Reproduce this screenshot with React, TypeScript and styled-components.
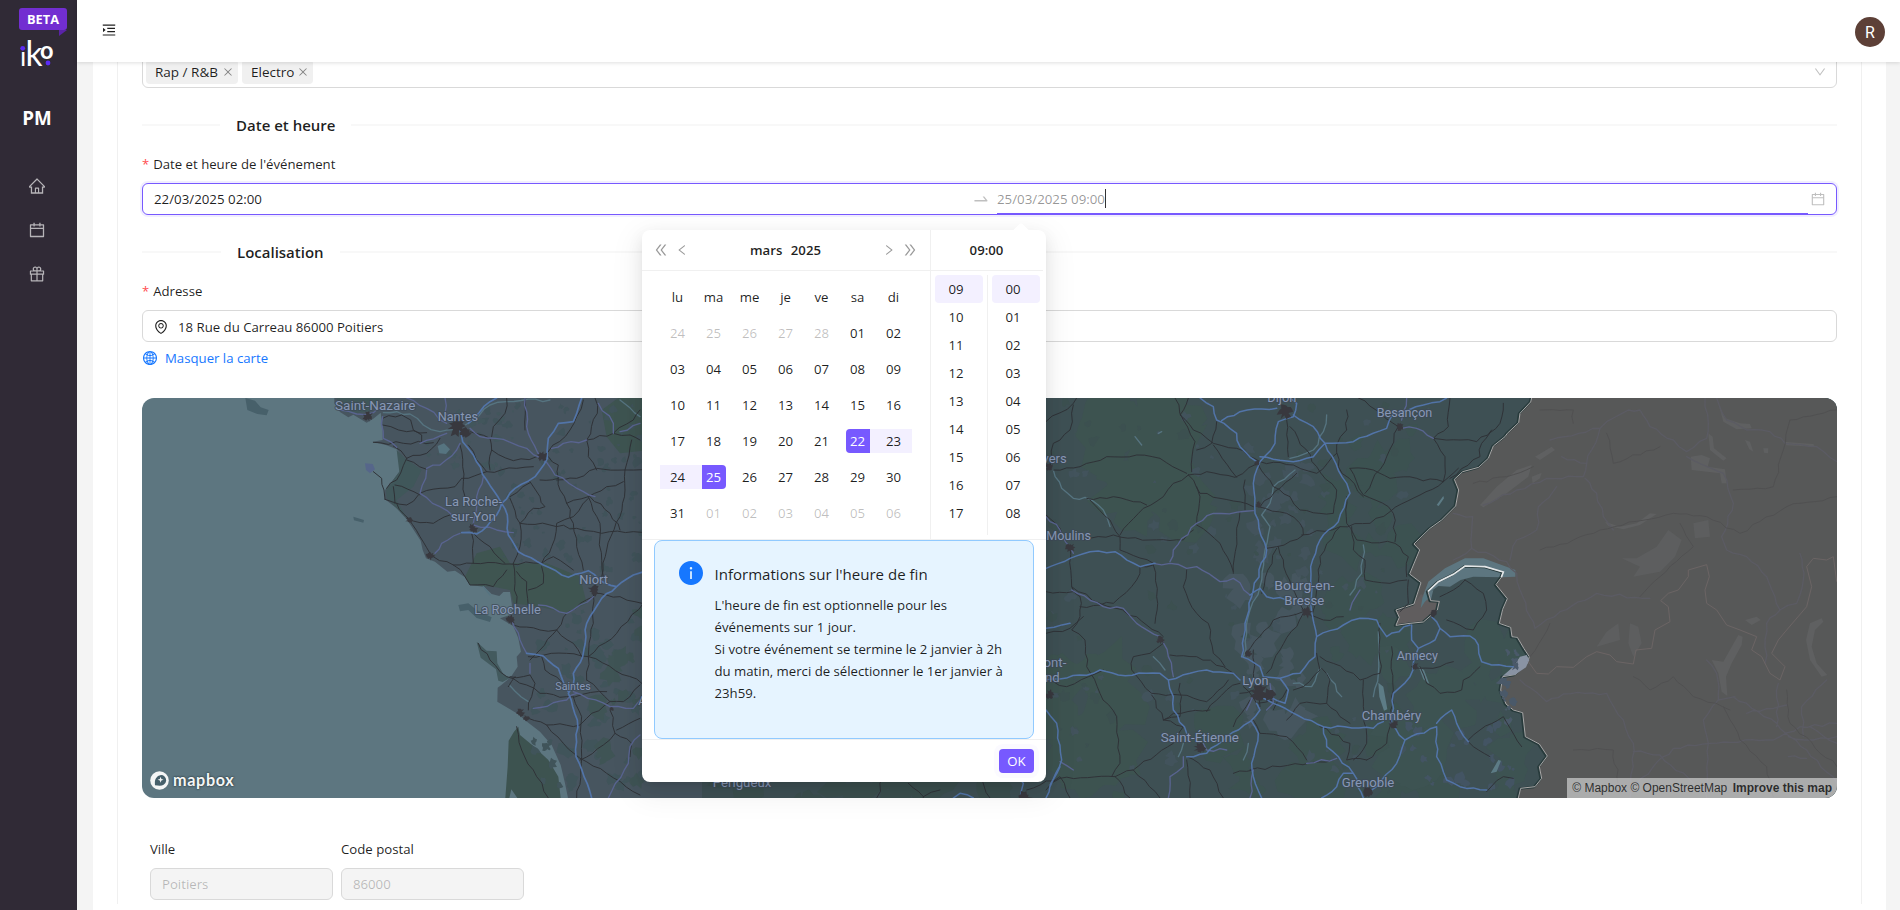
import React from "react";
import styled, { createGlobalStyle, css } from "styled-components";
import type { IconType } from "react-icons";
import {
  AiFillInfoCircle,
  AiOutlineCalendar,
  AiOutlineClose,
  AiOutlineDoubleLeft,
  AiOutlineDoubleRight,
  AiOutlineDown,
  AiOutlineEnvironment,
  AiOutlineGift,
  AiOutlineGlobal,
  AiOutlineHome,
  AiOutlineLeft,
  AiOutlineMenuUnfold,
  AiOutlineRight,
  AiOutlineSwapRight,
} from "react-icons/ai";

const PRIMARY = "#7759ff";
const PRIMARY_BG = "#f3f0ff";
const TEXT = "rgba(0, 0, 0, 0.88)";
const FAINT = "rgba(0, 0, 0, 0.25)";
const SPLIT = "#f0f0f0";

const GlobalStyle = createGlobalStyle`
  * { box-sizing: border-box; }
  body { margin: 0; overflow: hidden; }
  body, input, button {
    font-family: "Open Sans", "Noto Sans", sans-serif;
    font-size: 13.2px;
    line-height: 22px;
    color: ${TEXT};
  }
  svg { display: block; }
`;

/* The glyphs keep a 64-unit margin in their 1024 grid; trim it so that size is the drawn size. */
const Icon = ({ of: Glyph, size }: { of: IconType; size: number }) => (
  <Glyph size={size} viewBox="64 64 896 896" />
);

/* ---------- Shell ---------- */

const Shell = styled.div`
  display: flex;
  width: 100%;
  height: 100vh;
  overflow: hidden;
  background: #f4f4f4;
`;

const Sidebar = styled.aside`
  display: flex;
  flex-direction: column;
  align-items: center;
  flex: 0 0 77px;
  padding: 8px 3px 0 0;
  background: #302a36;
`;

const Beta = styled.div`
  position: relative;
  width: 48px;
  height: 22px;
  margin-left: 12px;
  border-radius: 3px;
  background: #722ed1;
  color: #fff;
  font-size: 12.8px;
  font-weight: 700;
  text-align: center;

  &::after {
    content: "";
    position: absolute;
    top: 22px;
    right: 0;
    border: 4px solid transparent;
    border-width: 0 8px 6px 0;
    border-color: transparent;
    border-top: 6px solid #5a23a8;
    border-bottom: 0;
  }
`;

const LogoSvg = styled.svg`
  margin-top: 3px;
`;

const Initials = styled.div`
  margin-top: 25px;
  color: #fff;
  font-size: 18.8px;
  font-weight: 700;
  line-height: 28px;
`;

const Nav = styled.nav`
  display: flex;
  flex-direction: column;
  gap: 28px;
  margin-top: 46px;
  color: rgba(255, 255, 255, 0.65);
`;

const Main = styled.div`
  display: flex;
  flex-direction: column;
  flex: 1;
  min-width: 0;
`;

const Header = styled.header`
  position: relative;
  z-index: 2;
  display: flex;
  align-items: center;
  justify-content: space-between;
  flex: 0 0 62px;
  padding: 0 15px 0 25px;
  background: #fff;
  box-shadow: 0 1px 4px rgba(0, 0, 0, 0.13);
`;

const Toggle = styled.div`
  padding-bottom: 2px;
`;

const Avatar = styled.div`
  width: 30px;
  height: 30px;
  margin-top: 2px;
  border-radius: 50%;
  background: #5d4037;
  color: #fff;
  font: 16px/31px Roboto, sans-serif;
  text-align: center;
`;

const Card = styled.main`
  flex: 1;
  min-height: 0;
  margin: 0 14px 0 16px;
  padding: 0 24px;
  background: #fff;
`;

const Form = styled.section`
  height: 100%;
  padding: 0 24px;
  border: solid ${SPLIT};
  border-width: 0 1px;
`;

/* ---------- Fields ---------- */

const control = css`
  display: flex;
  align-items: center;
  height: 32px;
  border: 1px solid #d9d9d9;
  border-radius: 6px;
  background: #fff;
`;

const Select = styled.div`
  ${control}
  margin-top: -6px;
  padding: 0 10px 0 3px;
  color: ${FAINT};
`;

const Tags = styled.div`
  display: flex;
  flex: 1;
  gap: 4px;
`;

const Tag = styled.span<{ $width: number }>`
  display: inline-flex;
  align-items: center;
  justify-content: space-between;
  width: ${(p) => p.$width}px;
  height: 24px;
  padding: 0 5px 0 9px;
  border-radius: 4px;
  background: #f0f0f0;
  color: ${TEXT};
  font-size: 13.5px;

  svg { color: rgba(0, 0, 0, 0.45); }
`;

const Divider = styled.h3<{ $lead: number }>`
  display: flex;
  align-items: center;
  height: 24px;
  margin: 25px 0 16px;
  font-size: 15px;
  font-weight: 600;
  line-height: 24px;

  &::before,
  &::after {
    content: "";
    height: 2px;
    background: #f8f8f8;
  }
  &::before { width: ${(p) => p.$lead}px; margin-right: 16px; }
  &::after { flex: 1; margin-left: 16px; }
`;

const Label = styled.label<{ $required?: boolean }>`
  display: block;
  margin-bottom: 8px;

  ${(p) =>
    p.$required &&
    css`
      &::before {
        content: "*";
        margin-right: 4px;
        color: #ff4d4f;
        font-size: 13px;
      }
    `}
`;

const Range = styled.div`
  ${control}
  position: relative;
  padding: 0 11px;
  border-color: ${PRIMARY};
  box-shadow: 0 0 0 2px rgba(119, 89, 255, 0.1);
`;

const RangeValue = styled.div<{ $active?: boolean }>`
  display: flex;
  align-items: center;
  flex: 1;
  height: 32px;
  font-size: 13.3px;
  ${(p) =>
    p.$active &&
    css`
      color: rgba(0, 0, 0, 0.42);
      border-bottom: 2px solid ${PRIMARY};
      padding-top: 1px;
    `}
`;

const Caret = styled.i`
  width: 1px;
  height: 19px;
  background: #333;
`;

const RangeArrow = styled.div`
  padding: 0 8px;
  color: ${FAINT};
`;

const RangeIcon = styled.div`
  margin-left: 3px;
  color: ${FAINT};
`;

const Address = styled.div`
  ${control}
  gap: 10px;
  padding: 1px 11px 0;
`;

const MapLink = styled.a`
  display: flex;
  align-items: center;
  gap: 8px;
  margin: 5px 0 29px 1px;
  color: #1677ff;
`;

const Row = styled.div`
  display: flex;
  gap: 8px;
  padding: 40px 8px 0;
`;

const Disabled = styled.div`
  ${control}
  width: 183px;
  padding: 0 11px;
  background: #f4f4f4;
  color: ${FAINT};
`;

/* ---------- Date picker popup ---------- */

const Popup = styled.div`
  position: absolute;
  z-index: 5;
  top: 46px;
  left: 499px;
  width: 404px;
  border-radius: 8px;
  background: #fff;
  box-shadow: 0 6px 16px rgba(0, 0, 0, 0.08), 0 3px 6px -4px rgba(0, 0, 0, 0.12),
    0 9px 28px 8px rgba(0, 0, 0, 0.05);

  &::before {
    content: "";
    position: absolute;
    top: -5px;
    left: 373px;
    width: 12px;
    height: 12px;
    border-radius: 2px;
    background: #fff;
    transform: rotate(45deg);
  }
`;

const Panels = styled.div`
  position: relative;
  display: flex;
  height: 310px;
  border-bottom: 1px solid ${SPLIT};
`;

const DatePanel = styled.div`
  width: 289px;
  border-right: 1px solid ${SPLIT};
`;

const PanelHeader = styled.div`
  display: flex;
  align-items: center;
  gap: 8px;
  height: 41px;
  padding: 0 13px 0 12px;
  border-bottom: 1px solid ${SPLIT};
  font-weight: 600;

  svg { color: rgba(0, 0, 0, 0.4); }
`;

const PanelTitle = styled.div`
  flex: 1;
  text-align: center;
  word-spacing: 5px;
`;

const Grid = styled.div`
  display: grid;
  grid-template-columns: repeat(7, 36px);
  grid-auto-rows: 36px;
  margin: 8px 18px 0 17.5px;
`;

type DayState = "out" | "start" | "end" | "first" | "last" | undefined;

const Cell = styled.div<{ $state?: DayState }>`
  display: flex;
  align-items: center;
  justify-content: center;
  height: 24px;
  margin: 6px 0;
  ${(p) => p.$state === "out" && css`color: ${FAINT};`}
  ${(p) =>
    p.$state === "start" &&
    css`background: linear-gradient(90deg, transparent 50%, ${PRIMARY_BG} 50%);`}
  ${(p) =>
    p.$state === "end" &&
    css`background: linear-gradient(90deg, ${PRIMARY_BG} 50%, transparent 50%);`}
  ${(p) => (p.$state === "last" || p.$state === "first") && css`background: ${PRIMARY_BG};`}
`;

const Day = styled.span<{ $state?: DayState }>`
  width: 24px;
  line-height: 24px;
  text-align: center;
  ${(p) =>
    (p.$state === "start" || p.$state === "end") &&
    css`
      background: ${PRIMARY};
      color: #fff;
      border-radius: ${p.$state === "start" ? "4px 0 0 4px" : "0 4px 4px 0"};
    `}
`;

const TimePanel = styled.div`
  width: 112px;
`;

const TimeColumns = styled.div`
  display: grid;
  grid-template-columns: 56px 57px;
  padding-top: 4px;
`;

const TimeColumn = styled.div`
  height: 260px;

  & + & { border-left: 1px solid ${SPLIT}; }
`;

const TimeCell = styled.div<{ $on?: boolean }>`
  width: 48px;
  height: 28px;
  margin-left: 4px;
  padding-left: 13.5px;
  border-radius: 4px;
  line-height: 28px;
  background: ${(p) => (p.$on ? PRIMARY_BG : "transparent")};
`;

const Alert = styled.div`
  display: flex;
  gap: 11.5px;
  width: 380px;
  height: 199px;
  margin: 0 12px;
  padding: 20px 24px;
  border: 1px solid #91caff;
  border-radius: 8px;
  background: #e6f4ff;

  svg { color: #1677ff; flex: none; }
`;

const AlertTitle = styled.div`
  margin: 1px 0 8px;
  font-size: 15.05px;
  line-height: 24px;
`;

const AlertText = styled.p`
  margin: 0;
  white-space: nowrap;
`;

const PopupFooter = styled.div`
  display: flex;
  justify-content: flex-end;
  height: 43px;
  padding: 9px 12px;
  border-top: 1px solid ${SPLIT};
`;

const OkButton = styled.button`
  width: 35px;
  height: 24px;
  padding: 0;
  border: 0;
  border-radius: 4px;
  background: ${PRIMARY};
  color: #fff;
  box-shadow: 0 0 0 5px rgba(119, 89, 255, 0.03);
`;

/* ---------- Map ---------- */

const MapFrame = styled.div`
  position: relative;
  height: 400px;
  border-radius: 12px;
  overflow: hidden;
  background: #5d7680;
`;

const Attribution = styled.div`
  position: absolute;
  right: 0;
  bottom: 0;
  height: 20px;
  padding: 0 5px;
  background: rgba(255, 255, 255, 0.5);
  color: rgba(0, 0, 0, 0.75);
  font: 12px/20px "Liberation Sans", sans-serif;
  white-space: nowrap;

  b { margin-left: 2px; }
`;

const MapboxMark = styled.div`
  position: absolute;
  left: 8px;
  bottom: 8px;
  display: flex;
  align-items: center;
  gap: 4px;
  color: #f4f6f6;
  font: 700 16.2px/20px Lato, sans-serif;
  letter-spacing: 0.65px;
  text-shadow: 0 0 2px #2e3e44, 0 0 2px #2e3e44;
`;

const noise = (n: number) => {
  const s = Math.sin(n * 127.1 + 311.7) * 43758.5453;
  return s - Math.floor(s);
};

/* Turns "x,y x,y ..." into a slightly irregular line, as surveyed roads are. */
const wobble = (points: string, amount = 5) => {
  const pts = points.split(" ").map((p) => p.split(",").map(Number));
  let d = `M${pts[0][0]} ${pts[0][1]}`;
  for (let i = 1; i < pts.length; i++) {
    const [ax, ay] = pts[i - 1];
    const [bx, by] = pts[i];
    const len = Math.hypot(bx - ax, by - ay);
    const steps = Math.max(1, Math.round(len / 22));
    for (let k = 1; k < steps; k++) {
      const t = k / steps;
      const off = (noise(ax + by * 3 + k * 7) - 0.5) * amount * 2;
      d += `L${(ax + (bx - ax) * t + (off * (by - ay)) / len).toFixed(1)} ${(ay + (by - ay) * t - (off * (bx - ax)) / len).toFixed(1)}`;
    }
    d += `L${bx} ${by}`;
  }
  return d;
};

const Roads = ({ lines, color, width, amount }: { lines: string[]; color: string; width: number; amount?: number }) => (
  <path d={lines.map((l) => wobble(l, amount)).join("")} fill="none" stroke={color} strokeWidth={width} strokeLinejoin="round" strokeLinecap="round" />
);

const Patches = ({ seed, count, x, y, w, h, size, color }: { seed: number; count: number; x: number; y: number; w: number; h: number; size: number; color: string }) => {
  let d = "";
  for (let i = 0; i < count; i++) {
    const cx = x + noise(seed + i * 3) * w;
    const cy = y + noise(seed + i * 3 + 1) * h;
    const r = size * (0.3 + noise(seed + i * 3 + 2));
    for (let k = 0; k < 11; k++) {
      const a = (k / 11) * Math.PI * 2;
      const q = r * (0.45 + noise(seed + i * 17 + k) * 0.75);
      d += `${k ? "L" : "M"}${(cx + Math.cos(a) * q).toFixed(0)} ${(cy + Math.sin(a) * q).toFixed(0)}`;
    }
    d += "Z";
  }
  return <path d={d} fill={color} />;
};

const DARK = "#2f3237";
const BLUE = "#5274a8";
const VIOLET = "#596490";

const Place = ({ x, y, w, size = 40, children }: { x: number; y: number; w: number; size?: number; children: string }) => (
  <text x={x} y={y} fontSize={size} textLength={w} lengthAdjust="spacingAndGlyphs" fontFamily="Roboto, sans-serif" fill="#8797b5" stroke="#3d4957" strokeWidth={6} strokeOpacity={0.75} paintOrder="stroke" strokeLinejoin="round">
    {children}
  </text>
);

const City = ({ x, y, r }: { x: number; y: number; r: number }) => {
  let d = "";
  for (let k = 0; k < 18; k++) {
    const a = (k / 18) * Math.PI * 2;
    const q = r * (k % 2 ? 0.35 : 0.6) + r * noise(x + k * 5) * 0.5;
    d += `${k ? "L" : "M"}${(x + Math.cos(a) * q).toFixed(0)} ${(y + Math.sin(a) * q).toFixed(0)}`;
  }
  return <path d={d + "Z"} fill="#38383e" />;
};

const WEST_COAST =
  "M583 0L583 40L600 66L625 82L640 74L680 98L700 86L722 68L728 110L728 150L698 155L740 166L770 178L792 208L778 245L755 275L735 300L735 328L770 355L800 388L815 410L842 452L848 480L858 505L885 515L922 545L945 542L975 562L990 585L1032 590L1055 612L1078 618L1090 606L1110 606L1115 640L1118 672L1080 685L1105 700L1120 708L1135 745L1143 785L1130 800L1133 830L1112 862L1085 884L1073 893L1072 935L1130 970L1165 998L1200 1025L1235 1065L1262 1125L1275 1180L1284 1224L2760 1224L2760 0Z";

const WestMap = () => (
  <g transform="translate(-2 -8) scale(.33333)">
    <path d={WEST_COAST} fill="#47555f" />
    <path d="M1135 1010L1122 1025L1106 1052L1103 1130L1096 1224L1108 1224L1114 1198L1132 1224L1262 1224L1255 1160L1225 1110L1180 1068L1140 1035Z" fill="#3d5350" />
    <path d="M1010 755L1040 782L1070 784L1072 820L1090 852L1110 864L1088 876L1075 872L1068 838L1022 803Z" fill="#435a5e" />
    <path d="M316 24L345 32L362 52L386 60L380 76L352 72L322 60ZM640 380L672 390L670 398L642 391ZM955 645L985 640L1010 660L1055 682L1050 696L1010 684L985 660L960 664Z" fill="#47606a" />
    <path d="M675 220L698 222L705 238L690 250L678 240Z" fill="#56668a" />
    <path d="M975 560L1010 490L1080 470L1110 520L1220 520L1320 560L1340 640L1280 670L1200 650L1120 640L1110 600L1060 590L990 585Z" fill="#3f5551" />
    <path d="M1385 60L1440 20L1530 0L1530 180L1440 190L1400 140Z" fill="#3e5451" />
    <path d="M770 180L795 205L845 240L820 290L770 330L800 385L740 325L738 300L778 245Z" fill="#40575a" />
    <path d="M722 24L590 24L600 62L640 70L690 64Z" fill="#40575a" />
    <Patches seed={3} count={80} x={1030} y={40} w={500} h={520} size={13} color="#40535a" />
    <Patches seed={41} count={60} x={1180} y={660} w={350} h={560} size={19} color="#40545a" />
    <Patches seed={77} count={26} x={860} y={60} w={260} h={180} size={11} color="#42565c" />
    <Patches seed={91} count={22} x={1370} y={660} w={150} h={520} size={28} color="#3f5455" />
    <path d="M893 168L912 160L930 178L918 192L898 190Z" fill="#567480" />
    <Roads lines={["730,68 810,72 850,105 900,125 960,118 1000,90 1050,45 1100,35 1230,30", "1108,885 1165,935", "1440,30 1500,80", "1030,590 1050,615"]} color="#567480" width={4} />
    <Roads
      color={DARK}
      width={3}
      lines={[
        "728,85 785,75 812,90 820,120 845,135 845,157", "728,105 800,125 860,128", "700,157 790,160 880,158", "760,168 800,205 860,190 900,145", "800,205 770,270 740,295", "800,210 860,238", "840,310 900,295 945,290 965,265 1040,245 1130,235 1180,230", "765,285 840,315", "760,290 765,340", "735,328 800,345 835,315", "800,385 840,398 880,400 930,375", "960,165 968,230 975,320", "700,245 725,265 732,300 735,328", "770,340 805,385 840,440 870,490", "985,165 1040,245", "990,125 1050,145 1055,180 1050,240", "1100,24 1095,70 1060,110 1055,140", "1055,180 1120,212 1190,200", "1155,24 1155,120", "1225,185 1290,120 1310,80 1330,30", "1225,200 1255,225 1255,265 1200,270", "1250,270 1310,265 1370,235 1455,240 1530,245", "1340,150 1420,130 1470,135 1500,150", "1340,150 1345,200 1370,240", "1365,24 1372,70 1340,150", "1500,60 1480,90 1420,130", "1475,150 1455,240 1455,300 1440,380 1400,480 1385,560", "1255,265 1260,300 1280,340 1345,320 1400,290 1450,275", "1170,275 1200,320 1215,350 1180,355 1140,400", "1110,320 1170,278", "1110,325 1140,400 1140,470 1120,520", "1140,400 1230,405 1310,415 1385,430 1480,425 1530,425", "1345,320 1380,400 1380,440 1390,560", "1345,325 1300,380 1250,400 1235,470 1205,520", "1350,320 1410,370 1440,420", "1280,340 1300,400 1310,470 1330,540", "1000,430 1050,470 1095,520", "995,430 1000,520", "880,500 940,525 1000,520 1110,522 1205,520 1240,500 1300,540", "940,525 975,560 990,585 1060,590 1100,540", "1120,520 1125,580 1130,640", "1130,545 1160,575 1165,650", "1205,530 1210,580 1165,600", "1360,610 1360,700 1345,800 1340,870", "1360,610 1440,620 1530,650", "1510,640 1430,730 1345,800", "1120,705 1200,720 1250,720 1285,665 1360,620", "1250,720 1200,780 1170,810", "1250,720 1300,760 1325,800", "1165,800 1280,790 1345,800 1530,890", "1205,800 1215,840 1280,890", "1015,760 1050,810 1100,860 1160,885 1200,910 1280,920 1400,905", "1110,860 1170,855 1185,880 1175,920 1165,960", "1125,860 1105,890", "1340,870 1410,935 1450,935 1500,885", "1410,935 1340,985 1320,1005 1220,1005 1165,985", "1300,920 1325,980 1325,1100 1310,1224", "1410,960 1425,1030 1475,1060 1470,1100", "1425,1030 1390,1065 1320,1110", "1220,1005 1270,1060 1320,1105 1400,1150 1500,1215", "1130,1010 1145,1080 1190,1160 1225,1224", "1500,985 1430,1020",
      ]}
    />
    <Roads
      color={VIOLET}
      width={4}
      lines={["600,60 650,72 700,68 728,50", "728,80 730,145 770,172", "800,24 860,55 920,100", "915,24 915,70 950,100", "840,160 920,130", "860,235 900,225 950,180 960,160", "860,240 840,310 900,350 960,390", "1030,260 1010,320 1000,400", "990,115 1020,140 1090,148 1160,175 1205,205 1245,255 1330,305 1365,320", "1155,24 1160,110 1205,205", "1000,405 1070,420 1120,428", "885,490 905,460 960,430", "1235,175 1270,160 1340,150", "1375,40 1420,100 1420,130", "1440,125 1500,100", "1195,645 1280,670 1320,645 1360,620", "1115,690 1140,750 1160,790", "1170,820 1170,850", "1180,955 1280,930 1310,910", "1300,905 1410,950 1480,955 1500,930", "1500,1035 1470,1070 1465,1120 1405,1224"]}
    />
    <Roads
      color={BLUE}
      width={5}
      amount={3}
      lines={["960,118 968,155 1000,195 1040,270 1085,340 1102,375 1105,435 1135,485 1210,525 1285,562 1345,542 1395,580 1430,590 1480,555 1530,540", "985,100 1050,35 1070,24", "1325,24 1300,95 1255,100 1225,145 1222,205 1185,260 1125,295 1085,340 1070,375 1040,410 1010,432 965,428", "1430,590 1385,625 1340,700 1328,800 1300,850 1300,885 1285,910 1312,990 1308,1100 1355,1224", "1160,790 1210,798 1255,835 1285,905"]}
    />
    <City x={950} y={108} r={34} /><City x={975} y={130} r={20} /><City x={1207} y={200} r={17} /><City x={998} y={415} r={16} /><City x={870} y={497} r={16} /><City x={1362} y={600} r={19} /><City x={1112} y={690} r={16} /><City x={685} y={80} r={18} /><City x={808} y={390} r={12} /><City x={1140} y={968} r={15} /><City x={1160} y={985} r={12} /><City x={1415} y={957} r={8} />
    <Place x={585} y={61} w={241}>Saint-Nazaire</Place>
    <Place x={893} y={92} w={121}>Nantes</Place>
    <Place x={915} y={347} w={171}>La Roche-</Place>
    <Place x={932} y={392} w={136}>sur-Yon</Place>
    <Place x={1318} y={581} w={86}>Niort</Place>
    <Place x={1003} y={671} w={200}>La Rochelle</Place>
    <Place x={1246} y={899} w={106} size={33}>Saintes</Place>
    <Place x={1495} y={945} w={24}>A</Place>
  </g>
);

/* The border between France and its eastern neighbours. */
const BORDER =
  "M1475 24L1472 36L1440 70L1436 98L1402 130L1395 140L1360 168L1345 205L1316 232L1268 245L1243 268L1256 300L1247 348L1205 390L1170 415L1122 462L1139 480L1109 552L1143 578L1122 642L1068 660L1078 682L1068 706L1110 700L1150 696L1192 660L1198 634L1172 632L1164 604L1195 575L1240 553L1275 528L1335 530L1390 546L1384 562L1368 584L1402 626L1388 658L1378 700L1412 712L1416 740L1432 742L1452 776L1468 800L1462 820L1425 854L1388 860L1382 900L1398 942L1420 960L1448 968L1456 1040L1498 1062L1522 1098L1498 1130L1505 1165L1485 1190L1442 1195L1435 1224";

const EastMap = () => (
  <g transform="translate(898 -8) scale(.33333)">
    <rect x={-1200} y={0} width={3700} height={1230} fill="#3e5054" />
    <Patches seed={7} count={26} x={180} y={40} w={260} h={380} size={80} color="#3d5350" />
    <Patches seed={19} count={22} x={30} y={820} w={230} h={400} size={75} color="#3d5350" />
    <Patches seed={29} count={30} x={880} y={100} w={230} h={700} size={65} color="#3c5251" />
    <Patches seed={57} count={26} x={480} y={1000} w={760} h={220} size={60} color="#3c5250" />
    <Patches seed={67} count={30} x={1060} y={760} w={400} h={460} size={70} color="#3d5352" />
    <Patches seed={12} count={34} x={590} y={560} w={200} h={470} size={40} color="#46565f" />
    <Patches seed={88} count={28} x={640} y={230} w={180} h={320} size={26} color="#43535c" />
    <Patches seed={71} count={60} x={20} y={30} w={1150} h={1180} size={16} color="#42535c" />
    <Patches seed={52} count={60} x={20} y={30} w={1150} h={1180} size={16} color="#3c5050" />
    <Patches seed={63} count={24} x={1100} y={1000} w={340} h={200} size={15} color="#435463" />
    <Patches seed={22} count={24} x={-1200} y={1170} w={1200} h={70} size={50} color="#3b4f4e" />
    <path d={BORDER + "L2500 1224L2500 0L1475 0Z"} fill="#575858" />
    <path d="M1180 600L1172 632L1142 655L1148 620L1165 575L1215 535L1275 505L1330 505L1385 525L1426 540L1426 560L1384 562L1300 560L1262 570L1230 590L1195 588L1170 606Z" fill="#5d7680" />
    <path d="M1068 706L1078 682L1068 660L1122 642L1143 612L1172 632L1198 634L1192 660L1150 696L1110 700Z" fill="#605d5e" />
    <path d="M1142 655L1148 620L1160 610L1166 625L1154 636Z" fill="#567681" />
    <path d={BORDER} fill="none" stroke="#273a3b" strokeWidth={7} transform="translate(-3 1)" strokeLinejoin="round" />
    <path d={BORDER} fill="none" stroke="#aaa8a8" strokeWidth={3} strokeLinejoin="round" />
    <path d="M1164 604L1195 575L1240 553L1275 528L1335 530L1390 546L1384 562" fill="none" stroke="#e2e6e8" strokeWidth={5} />
    <path d="M1460 795L1468 810L1458 832L1425 854L1388 858L1420 830L1440 800Z" fill="#8993a3" />
    <Patches seed={15} count={20} x={1380} y={780} w={50} h={240} size={14} color="#4a5969" />
    <g fill="#5f6061">
      <path d="M1320 345L1370 290L1430 240L1475 225L1465 260L1400 310L1330 352ZM1485 200L1535 170L1545 180L1500 210ZM1475 260L1505 248L1500 265L1478 280Z" />
      <path d="M1695 395L1740 410L1790 400L1830 370L1850 372L1800 405L1750 418L1705 408ZM1952 200L1985 195L2010 205L2003 230L2055 238L2060 280L2045 280L2040 250L1955 240ZM2005 130L2018 140L2022 175L2060 205L2050 212L2010 180ZM2035 40L2055 85L2100 100L2130 102L2135 115L2090 118L2050 95Z" />
      <path d="M1745 505L1790 505L1850 470L1885 420L1925 450L1905 500L1860 545L1780 560L1800 530ZM1960 400L2005 390L2010 440L1965 445ZM1670 770L1700 725L1735 700L1740 750ZM1770 700L1795 710L1805 760L1780 800L1765 760Z" opacity=".75" />
      <path d="M2015 810L2050 815L2095 735L2108 740L2105 765L2075 820L2058 860L2062 918L2045 905L2035 850ZM2310 700L2345 685L2350 695L2325 720L2315 770L2330 820L2362 855L2345 860L2310 810L2298 750ZM2115 690L2150 680L2162 690L2135 705Z" />
      <path d="M2115 150L2130 155L2140 185L2128 178ZM2170 175L2185 175L2184 190L2172 188ZM2230 155L2320 162L2325 170L2240 166Z" />
    </g>
    <Roads
      color="#5b5b63"
      width={4}
      lines={["1530,150 1680,115 1700,95 1765,60 1800,60 1830,110 1900,150 1940,185 2000,145 2005,100 1995,24", "1330,345 1430,300 1520,265 1630,260 1640,220 1680,115", "1565,200 1640,220", "1635,265 1670,310 1690,380 1720,420", "1295,475 1298,380 1240,370", "1240,510 1295,475 1400,515 1430,550 1440,600 1470,680 1485,715 1560,665 1670,610 1830,625", "1410,510 1430,450 1490,420 1495,350 1550,290", "2030,24 2060,90 2120,120 2190,125 2235,160 2330,170 2391,215", "1940,200 2050,250 2080,340 2045,440 2060,480 2120,500 2180,560 2220,660 2180,700 2175,820", "2220,660 2270,640 2290,570 2280,490", "1440,870 1520,935 1570,912 1700,910 1750,990 1780,1060 1770,1224", "1780,1085 1860,1095 1960,1180", "1790,1180 1900,1075 2010,1060 2200,1050 2280,1010 2391,1000", "2080,920 2210,1000 2250,1040 2300,1080 2391,1180", "2120,970 2240,945", "2210,1010 2215,880", "2000,810 2030,850 2035,930 1990,990 2005,1060 2000,1224", "2245,1040 2320,1050 2391,1040", "2245,1100 2300,1105", "2290,1040 2285,950 2360,870", "2391,1060 2310,1010", "2035,930 2085,920"]}
    />
    <Roads color="#505051" width={3} lines={["1500,60 1600,60 1600,100", "1700,130 1720,220 1860,170", "1300,280 1400,260 1480,230", "1500,480 1600,450 1680,420 1900,370 2000,380 2100,430 2240,350 2391,320", "2080,300 2200,290 2230,180 2250,90 2391,60", "1920,400 1960,470 1860,560 1800,620", "1470,800 1510,740 1530,700", "1600,1080 1720,1080 1740,1200", "2050,950 2100,1050 2180,1130 2200,1220", "2240,900 2250,1000 2391,1130", "1780,860 1830,900 1900,860 1960,920 2070,960"]} />
    <path d="M1465 815L1490 850L1525 852L1550 830L1600 832L1640 800L1670 785L1710 795L1730 815L1780 822L1788 780L1835 775L1845 720L1890 695L1885 650L1862 632L1885 610L1915 600L1945 560L1945 540L2000 524L2008 560L1995 600L2000 640L2030 660L2060 705L2100 720L2150 740L2135 780L2165 800L2190 850L2220 870L2235 830L2195 790L2215 750L2240 720L2300 650L2315 590L2300 530L2320 505L2360 510L2380 500L2390 575" fill="none" stroke="#6b6464" strokeWidth={3} strokeLinejoin="round" />
    <Roads lines={["40,240 65,295 100,325 135,322 190,360 210,410", "860,75 850,125 820,180 750,205", "765,240 700,290 690,340 665,375 690,410 675,480 660,590 630,660 620,730 610,800", "970,465 965,550 930,615", "1015,725 1015,850 1000,920", "840,835 815,890 760,880", "860,850 905,920", "340,800 375,840", "430,1060 415,1100", "625,1060 610,1110", "285,140 305,165", "355,130 365,125"]} color="#567480" width={4} />
    <path d="M1015 878L1030 890L1042 958L1032 962L1018 920ZM1136 830L1152 840L1168 882L1150 868ZM1190 345L1210 318L1212 325L1196 348ZM1352 1150L1375 1110L1383 1112L1370 1145Z" fill="#5d7c86" />
    <Roads
      color={DARK}
      width={3}
      lines={[
        "18,95 100,40 110,24", "100,45 90,120 40,160 30,230", "40,240 120,230 200,200 290,195 360,205 440,250", "405,24 430,90 465,155 455,245", "445,24 420,75 460,120 520,160 590,175 660,215", "445,255 400,280 370,320 310,355 240,435", "445,255 500,245 585,262 650,222", "530,95 515,160 470,180", "520,165 590,262", "445,255 480,310 540,325 640,350", "470,290 480,320 470,400", "600,365 590,440 580,550", "470,405 540,460 580,545", "615,270 615,360", "140,325 220,320 320,345", "150,330 210,390 240,440 240,480 340,520", "130,450 220,435 330,450 430,450 460,420", "18,375 60,415 90,470 95,590 120,620", "340,525 300,530 290,570 220,640 120,650", "340,525 350,620 345,700", "440,540 430,590 470,670 505,700 520,790 555,830", "18,605 100,605", "120,620 120,680 95,720 135,750 140,830 180,910 230,980 240,1120 215,1160", "18,870 80,890 190,840", "95,590 180,640 290,680 370,740", "370,760 330,790 280,800 275,840 335,910 420,915 500,935 565,870", "390,795 470,800 550,830 600,870", "335,915 370,990 430,1010 400,1060 280,1140 225,1160 60,1165 18,1200", "420,880 420,980 370,990", "225,1160 270,1224", "280,1140 360,1224", "440,1100 510,1140 550,1224", "440,1110 450,1224", "500,965 560,900 600,880", "580,1010 630,930", "655,225 700,290 750,320 780,360 880,370 890,300 830,230 750,110", "660,215 760,225 830,250 890,190", "740,90 745,200", "770,250 660,350", "655,350 740,370 780,400 790,435 710,470 680,475", "715,470 755,590 790,660", "710,475 665,610", "790,665 700,690 620,790", "790,670 720,780 680,850", "790,670 850,690 910,680", "785,435 900,410 990,400 1050,365 1140,315 1210,275", "900,410 840,500 830,600 815,680", "930,235 1000,240 1050,265 1130,265 1210,275 1255,235", "930,235 970,315 1045,350 1060,370 1065,455", "920,60 920,120 890,165 895,230 970,320", "1075,110 1040,200 975,310", "920,320 920,400 950,450 1065,460 1105,500 1100,560", "935,410 940,480 975,510 975,570 1050,580 1100,570", "1180,145 1215,200 1210,275", "1180,145 1260,150 1310,155 1355,120", "1230,24 1225,110 1180,145", "1390,40 1380,100 1325,160 1320,200 1230,265", "955,24 1075,110", "830,790 840,840 790,890 760,900", "845,835 870,870 860,940 780,940 740,990", "860,940 900,980 930,1000", "840,800 940,850 960,870 1020,850 1020,700", "970,870 970,950 980,1060 940,1110", "1055,770 1060,900 1050,1000", "640,990 660,1030 740,1040 800,1110", "630,1140 720,1130 880,1110", "840,1010 930,1060 920,1110 980,1110", "1050,1010 1040,1060 980,1110", "1115,830 1200,830 1240,815", "1140,830 1160,880 1200,910 1265,900 1270,870 1320,830", "1105,570 1105,640 1080,665", "1275,570 1240,600 1200,620", "1275,570 1330,610 1340,660 1300,720 1220,690", "1285,1050 1320,1020 1390,980 1445,1070", "1280,1050 1300,1070 1350,1100", "1340,1205 1390,1160 1420,1165", "18,730 90,715 130,680", "370,990 400,970 510,960", "580,1150 640,1140", "660,950 640,850 640,780", "700,960 740,900", "610,890 650,940 700,930", "600,910 640,900", "-470,1160 -490,1224", "-395,1180 -350,1220 -300,1200", "-350,1220 -360,1260", "-180,1150 -150,1224", "-40,1200 60,1160 90,1224",
      ]}
    />
    <Roads
      color={VIOLET}
      width={4}
      lines={["390,515 400,480 470,400 520,370 640,362", "340,520 390,520 440,535 470,530 540,575 580,565 630,615", "95,600 190,650 250,655 290,700 360,740 385,800 400,860", "18,380 60,420 90,470 100,490", "430,1100 430,1130 390,1160 385,1224", "60,1115 100,1140", "1085,115 1130,115 1180,145", "1100,24 1085,90", "960,600 930,660", "640,1140 630,1224", "800,1120 890,1105", "490,1060 500,1080 560,1080", "690,880 700,940 680,960", "620,960 650,900"]}
    />
    <Roads
      color={BLUE}
      width={4.5}
      amount={4}
      lines={["480,24 520,50 530,90 590,130 600,170 650,215", "545,92 600,65 710,55", "750,24 770,40 760,80 715,95 705,160 660,215 640,280 645,370 680,480 640,600 615,700 605,800", "760,75 820,110 855,160 920,280 930,310 895,395 840,450 812,530 812,640 830,740 825,800 780,850 720,865", "660,200 760,215 820,200 855,160 940,155 1040,115 1060,70 1150,45 1200,35 1220,24", "18,535 90,505 150,485 225,485 300,530 345,520", "630,615 660,595 680,620 740,630", "830,740 910,705 960,685 1010,690 1040,740 1110,705", "1115,705 1115,750 1135,775 1185,750 1200,715 1175,680", "1200,715 1230,740 1290,738 1315,765 1325,815 1355,825 1420,830", "1135,775 1110,860 1060,910 1055,1000", "18,870 160,850 180,840 235,855 360,850 385,870 450,850 500,840 580,850 600,870", "385,870 400,920 400,960 440,1030", "605,800 660,830 670,860 720,865 745,900 735,940 690,920", "660,920 700,940 850,1010 860,1070 940,1150 970,1224", "850,1010 1000,1015 1030,995", "650,940 660,960 630,995 560,1040 500,1090 440,1100", "635,995 655,1030 635,1120 640,1160 665,1224", "1050,1000 1095,1050 1070,1120 1010,1190 975,1210", "1095,1050 1190,1010 1190,1100 1220,1170 1260,1190 1340,1200", "1190,1000 1235,960 1250,1000 1285,1055", "845,1224 890,1190 910,1150 940,1150", "18,960 50,1000 65,1110 18,1224", "-260,1224 -240,1210 -200,1224", "-60,1224 -50,1180 -65,1160", "30,1190 60,1130", "18,715 90,700"]}
    />
    <City x={735} y={65} r={26} /><City x={1080} y={112} r={14} /><City x={90} y={472} r={16} /><City x={655} y={345} r={12} /><City x={650} y={220} r={11} /><City x={800} y={665} r={19} /><City x={360} y={750} r={15} /><City x={655} y={910} r={34} /><City x={690} y={915} r={22} /><City x={625} y={790} r={15} /><City x={480} y={1075} r={19} /><City x={1125} y={828} r={12} /><City x={1060} y={1005} r={16} /><City x={985} y={1208} r={20} /><City x={30} y={915} r={17} /><City x={28} y={232} r={14} /><City x={1180} y={670} r={14} /><City x={-45} y={1224} r={24} />
    <Place x={-41} y={219} w={121}>Nevers</Place>
    <Place x={682} y={36} w={87}>Dijon</Place>
    <Place x={1010} y={81} w={167}>Besançon</Place>
    <Place x={19} y={450} w={134}>Moulins</Place>
    <Place x={703} y={600} w={180}>Bourg-en-</Place>
    <Place x={733} y={645} w={120}>Bresse</Place>
    <Place x={-94} y={832} w={173}>Clermont-</Place>
    <Place x={-75} y={876} w={134}>Ferrand</Place>
    <Place x={607} y={886} w={79}>Lyon</Place>
    <Place x={1070} y={810} w={124}>Annecy</Place>
    <Place x={965} y={989} w={179}>Chambéry</Place>
    <Place x={362} y={1057} w={235}>Saint-Étienne</Place>
    <Place x={905} y={1190} w={158}>Grenoble</Place>
    <Place x={-982} y={1190} w={176}>Périgueux</Place>
  </g>
);

const MapView = () => (
  <MapFrame>
    <svg width="1695" height="400" viewBox="0 0 1695 400">
      <defs>
        <clipPath id="east"><rect x="560" y="0" width="1135" height="400" /></clipPath>
      </defs>
      <WestMap />
      <g clipPath="url(#east)"><EastMap /></g>
    </svg>
    <MapboxMark>
      <svg width="19" height="19" viewBox="0 0 19 19">
        <circle cx="9.5" cy="9.5" r="9.3" fill="#f4f6f6" />
        <path d="M5 14.2C4.7 11 4.8 8.6 6.4 6.8a5.2 5.2 0 1 1 7.2 7C11.7 15 8.5 14.7 5 14.2Z" fill="#46606b" />
        <path d="M10.6 5.7L11.4 7.9L13.6 8.7L11.4 9.5L10.6 11.7L9.8 9.5L7.6 8.7L9.8 7.9Z" fill="#f4f6f6" />
      </svg>
      mapbox
    </MapboxMark>
    <Attribution>© Mapbox © OpenStreetMap <b>Improve this map</b></Attribution>
  </MapFrame>
);

/* ---------- Picker content ---------- */

const pad = (n: number) => String(n).padStart(2, "0");
const WEEKDAYS = ["lu", "ma", "me", "je", "ve", "sa", "di"];
const DAYS: { n: number; state: DayState }[] = [
  ...[24, 25, 26, 27, 28].map((n) => ({ n, state: "out" as DayState })),
  ...Array.from({ length: 31 }, (_, i) => {
    const n = i + 1;
    const marks: Record<number, DayState> = { 22: "start", 23: "last", 24: "first", 25: "end" };
    return { n, state: marks[n] };
  }),
  ...[1, 2, 3, 4, 5, 6].map((n) => ({ n, state: "out" as DayState })),
];

const PickerPopup = () => (
  <Popup>
    <Panels>
      <DatePanel>
        <PanelHeader>
          <Icon of={AiOutlineDoubleLeft} size={14} />
          <Icon of={AiOutlineLeft} size={12} />
          <PanelTitle>mars 2025</PanelTitle>
          <Icon of={AiOutlineRight} size={12} />
          <Icon of={AiOutlineDoubleRight} size={14} />
        </PanelHeader>
        <Grid>
          {WEEKDAYS.map((d) => <Cell key={d}>{d}</Cell>)}
          {DAYS.map(({ n, state }, i) => (
            <Cell key={i} $state={state}><Day $state={state}>{pad(n)}</Day></Cell>
          ))}
        </Grid>
      </DatePanel>
      <TimePanel>
        <PanelHeader><PanelTitle>09:00</PanelTitle></PanelHeader>
        <TimeColumns>
          {[9, 0].map((start) => (
            <TimeColumn key={start}>
              {Array.from({ length: 9 }, (_, i) => (
                <TimeCell key={i} $on={i === 0}>{pad(start + i)}</TimeCell>
              ))}
            </TimeColumn>
          ))}
        </TimeColumns>
      </TimePanel>
    </Panels>
    <Alert>
      <Icon of={AiFillInfoCircle} size={24} />
      <div>
        <AlertTitle>Informations sur l'heure de fin</AlertTitle>
        <AlertText>
          L'heure de fin est optionnelle pour les<br />
          événements sur 1 jour.<br />
          Si votre événement se termine le 2 janvier à 2h<br />
          du matin, merci de sélectionner le 1er janvier à<br />
          23h59.
        </AlertText>
      </div>
    </Alert>
    <PopupFooter><OkButton>OK</OkButton></PopupFooter>
  </Popup>
);

const Logo = () => (
  <LogoSvg width="40" height="46" viewBox="-2 -4 40 46">
    <g fill="#fff" fontFamily="Lato, sans-serif">
      <text x="1" y="29" fontSize="26">ı</text>
      <text x="6.5" y="29" fontSize="35" textLength="17" lengthAdjust="spacingAndGlyphs">k</text>
      <text x="21" y="21.5" fontSize="24" fontWeight="700" textLength="13.5" lengthAdjust="spacingAndGlyphs">o</text>
    </g>
    <circle cx="3.7" cy="11.3" r="2.4" fill="#5b2bf5" />
    <circle cx="29" cy="26" r="2.4" fill="#5b2bf5" />
  </LogoSvg>
);

export default function App() {
  return (
    <Shell>
      <GlobalStyle />
      <Sidebar>
        <Beta>BETA</Beta>
        <Logo />
        <Initials>PM</Initials>
        <Nav>
          <Icon of={AiOutlineHome} size={16} />
          <Icon of={AiOutlineCalendar} size={16} />
          <Icon of={AiOutlineGift} size={16} />
        </Nav>
      </Sidebar>
      <Main>
        <Header>
          <Toggle><Icon of={AiOutlineMenuUnfold} size={14} /></Toggle>
          <Avatar>R</Avatar>
        </Header>
        <Card>
          <Form>
            <Select>
              <Tags>
                <Tag $width={92}>Rap / R&amp;B <Icon of={AiOutlineClose} size={10} /></Tag>
                <Tag $width={71}>Electro <Icon of={AiOutlineClose} size={10} /></Tag>
              </Tags>
              <Icon of={AiOutlineDown} size={12} />
            </Select>

            <Divider $lead={78}>Date et heure</Divider>
            <Label $required>Date et heure de l'événement</Label>
            <Range>
              <RangeValue>22/03/2025 02:00</RangeValue>
              <RangeArrow><Icon of={AiOutlineSwapRight} size={16} /></RangeArrow>
              <RangeValue $active>25/03/2025 09:00<Caret /></RangeValue>
              <RangeIcon><Icon of={AiOutlineCalendar} size={14} /></RangeIcon>
              <PickerPopup />
            </Range>

            <Divider $lead={79}>Localisation</Divider>
            <Label $required>Adresse</Label>
            <Address>
              <Icon of={AiOutlineEnvironment} size={14} />
              18 Rue du Carreau 86000 Poitiers
            </Address>
            <MapLink><Icon of={AiOutlineGlobal} size={14} />Masquer la carte</MapLink>
            <MapView />

            <Row>
              <div><Label>Ville</Label><Disabled>Poitiers</Disabled></div>
              <div><Label>Code postal</Label><Disabled>86000</Disabled></div>
            </Row>
          </Form>
        </Card>
      </Main>
    </Shell>
  );
}
